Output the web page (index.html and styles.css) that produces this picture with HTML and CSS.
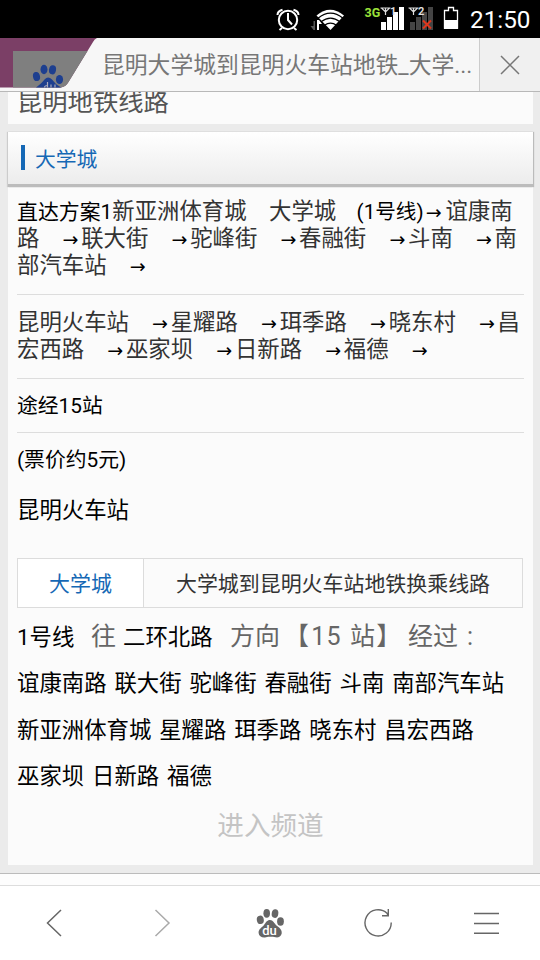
FILE: index.html
```
<!DOCTYPE html>
<html lang="zh-CN">
<head>
<meta charset="utf-8">
<title>昆明大学城到昆明火车站地铁</title>
<link rel="stylesheet" href="styles.css">
</head>
<body>
<div class="screen">
  <div class="status">
    <svg class="status-icons" width="200" height="38" viewBox="0 0 200 38">
      <g fill="none" stroke="#fff" stroke-width="2">
        <circle cx="18" cy="20" r="9.200"/>
        <path d="M18 13v7l4 4.500M12 28l-2.500 2M24 28l2.500 2M7.500 15q0-4 5-5.300M28.500 15q0-4-5-5.300"/>
      </g>
      <path d="M46.500 15.500Q60 4 74 15.500L60.500 30z" fill="#fff"/>
      <g fill="none" stroke="#000" stroke-width="1.300">
        <path d="M48 18.200q12.500-10 25 0M51 21.800q9.500-7.500 19 0M54.500 25.300q6-4.500 12 0"/>
      </g>
      <path d="M47 20h2v10h-2zM49 20l3 4h-3z" fill="#fff"/>
      <path d="M43.500 21H45v9h-1.500zM43.500 30l-3-4h3z" fill="#555"/>
      <g fill="#fff"><path d="M111 22h5v8h-5zM117 17h5v13h-5zM123 12h5v18h-5zM129 7h5v23h-5z"/></g>
      <g fill="#444"><path d="M140 22h5v8h-5zM146 17h5v13h-5zM152 12h5v18h-5zM158 7h5v23h-5z"/></g>
      <g fill="none" stroke="#ddd" stroke-width="1.200"><path d="M115.500 15V8M110.500 8h10M111.500 8l4 4 4-4M143.500 15V8M138.500 8h10M139.500 8l4 4 4-4"/></g>
      <path d="M153 20.500l8 8M161 20.500l-8 8" stroke="#e0361c" stroke-width="2"/>
      <path d="M174.500 10.500h4v-3h5v3h4v17.500h-13z" fill="none" stroke="#fff" stroke-width="1.300"/>
      <path d="M174 20h14v9h-14z" fill="#fff"/>
      <text class="net" x="94.500" y="17">3G</text>
      <text class="sim" x="120" y="15">1</text>
      <text class="sim" x="148" y="15">2</text>
    </svg>
    <span class="clock">21:50</span>
  </div>

  <header class="tabbar">
    <svg class="tab-thumb" width="100" height="53" viewBox="0 0 100 53">
      <path d="M0 0H97Q94.500 1 93 4L68.500 44Q66 48.500 61 49.500H0z" fill="#7b3f66"/>
      <path d="M13 13H87.500L68.500 44Q66 48.500 61 49.500H13z" fill="#7f7f7f"/>
      <g fill="#1e3f8f">
        <ellipse cx="36.500" cy="38.500" rx="3.500" ry="4.600" transform="rotate(-12 36.500 38.500)"/>
        <ellipse cx="44" cy="31.500" rx="3.500" ry="4.700"/>
        <ellipse cx="52.500" cy="31.800" rx="3.500" ry="4.600" transform="rotate(10 52.500 31.800)"/>
        <ellipse cx="59.500" cy="41.500" rx="3.600" ry="4.600"/>
        <path d="M36 49.500Q42 45 44.500 41.500Q48 37.500 52 41.500Q55 46 61 49.500z"/>
      </g>
      <path d="M47.500 44v5.500M44.500 49.500q0-2 3-2M51 46.500v3M55 46.500v3" fill="none" stroke="#aab" stroke-width="1.200"/>
    </svg>
    <div class="tab-title">昆明大学城到昆明火车站地铁_大学...</div>
    <div class="tab-close">
      <svg width="20" height="20" viewBox="0 0 20 20"><path d="M1 1L19 19M19 1L1 19" stroke="#777" stroke-width="1.500"/></svg>
    </div>
  </header>

  <main class="page">
    <div class="card page-title"><span>昆明地铁线路</span></div>
    <section class="card route">
      <h2 class="section-head"><i></i>大学城</h2>
      <div class="body">
        <div class="row stops">
          <div><b class="lead">直达方案1</b>新亚洲体育城　大学城　<b class="line-no">(1号线)</b><b class="arrow first">→</b>谊康南</div>
          <div>路　<b class="arrow">→</b>联大街　<b class="arrow">→</b>驼峰街　<b class="arrow">→</b>春融街　<b class="arrow">→</b>斗南　<b class="arrow">→</b>南</div>
          <div>部汽车站　<b class="arrow">→</b></div>
        </div>
        <div class="row stops">
          <div>昆明火车站　<b class="arrow">→</b>星耀路　<b class="arrow">→</b>珥季路　<b class="arrow">→</b>晓东村　<b class="arrow">→</b>昌</div>
          <div>宏西路　<b class="arrow">→</b>巫家坝　<b class="arrow">→</b>日新路　<b class="arrow">→</b>福德　<b class="arrow">→</b></div>
        </div>
        <div class="row small">途经15站</div>
        <div class="row small last">(票价约5元)</div>
        <div class="terminus">昆明火车站</div>
        <div class="tabs">
          <div class="tab active">大学城</div>
          <div class="tab">大学城到昆明火车站地铁换乘线路</div>
        </div>
        <div class="direction"><b class="no">1号线</b><span class="to">往</span><b class="dest">二环北路</b><span class="dir">方向</span><span class="count">【<span class="num">15 </span>站】</span><span class="via">经过</span><span class="colon">:</span></div>
        <div class="stations">
          <div>谊康南路 联大街 驼峰街 春融街 斗南 南部汽车站</div>
          <div>新亚洲体育城 星耀路 珥季路 晓东村 昌宏西路</div>
          <div>巫家坝 日新路 福德</div>
        </div>
        <div class="enter">进入频道</div>
      </div>
    </section>
  </main>

  <div class="strip"></div>
  <nav class="toolbar">
    <div><svg width="30" height="30" viewBox="0 0 30 30"><path d="M22 2L8.500 15L22 28" fill="none" stroke="#666" stroke-width="1.500"/></svg></div>
    <div><svg width="30" height="30" viewBox="0 0 30 30"><path d="M8.500 2L22 15L8.500 28" fill="none" stroke="#aaa" stroke-width="1.500"/></svg></div>
    <div><svg width="30" height="30" viewBox="0 0 30 30">
      <g fill="#666">
        <ellipse cx="5.300" cy="11.800" rx="3.500" ry="4.200" transform="rotate(-10 5.300 11.800)"/>
        <ellipse cx="11.700" cy="5.300" rx="3.300" ry="4.400"/>
        <ellipse cx="20" cy="5.600" rx="3.300" ry="4.300" transform="rotate(10 20 5.600)"/>
        <ellipse cx="25.500" cy="13.500" rx="3.400" ry="4.200"/>
        <path d="M15 12C18 12 19.500 15.500 21.500 17.500C24 19.500 27.200 21.500 26.700 25.500C26 29 23 29.700 20.500 29.300C17 28.700 14 28.700 11 29.300C7 30 4 28.500 3.600 25C3.400 21 7 19.500 9 17C10.800 14.500 12 12 15 12z"/>
      </g>
      <text class="paw-text" x="14.500" y="27">du</text>
    </svg></div>
    <div><svg width="30" height="30" viewBox="0 0 30 30"><path d="M28.200 14.500A13.100 13.100 0 1 1 24 5.200L25 7.500M25.300 1V7.800H19" fill="none" stroke="#666" stroke-width="1.400"/></svg></div>
    <div><svg width="30" height="30" viewBox="0 0 30 30"><path d="M3 5.500H28M3 15.500H28M3 25.200H28" stroke="#666" stroke-width="1.500"/></svg></div>
  </nav>
</div>
</body>
</html>
```
FILE: styles.css
```
* { box-sizing: border-box; }
body { margin: 0; }
b, i { font-weight: 400; font-style: normal; }

.screen {
  width: 540px;
  height: 960px;
  display: flex;
  flex-direction: column;
  overflow: hidden;
  background: #ebebeb;
  font-family: Roboto, "Noto Sans CJK SC", sans-serif;
  white-space: nowrap;
}

.status {
  flex: none;
  height: 38px;
  background: #000;
  display: flex;
  justify-content: flex-end;
  padding-right: 10px;
}
.status-icons { flex: none; }
.clock { width: 60px; color: #fff; font-size: 24.3px; line-height: 40px; text-align: center; }
.net { fill: #9be23a; font: 700 12.5px Roboto, sans-serif; }
.sim { fill: #ddd; font: 700 11px Roboto, sans-serif; }

.tabbar {
  flex: none;
  height: 54px;
  display: flex;
  background: #f7f7f7;
  border-bottom: 1px solid #b8b8b8;
}
.tab-thumb { flex: none; }
.tab-title { width: 379px; padding-left: 2px; font-size: 22.8px; line-height: 56px; color: #777; }
.tab-close {
  flex: 1;
  display: flex;
  align-items: center;
  justify-content: center;
  border-left: 1px solid #ccc;
  background: #f0f0f0;
}

.page { flex: none; height: 781px; padding: 0 7px 0 8px; }
.card { background: #fbfbfb; }
.page-title {
  height: 32px;
  margin-bottom: 8px;
  overflow: hidden;
  display: flex;
  align-items: flex-end;
  padding: 0 0 3px 9px;
  font-size: 25.3px;
  line-height: 36px;
  color: #555;
}
.route { height: 733px; }
.section-head {
  margin: 0;
  height: 55px;
  padding: 0 0 1px 13px;
  display: flex;
  align-items: center;
  gap: 10px;
  font-size: 20.8px;
  font-weight: 400;
  color: #1568b5;
  background: linear-gradient(#fff, #ececec);
  border-bottom: 3px solid #bcbcbc;
  box-shadow: 1px 0 1px #bbb, -1px 0 1px #ccc;
}
.section-head i { width: 4px; height: 25px; background: #1568b5; }

.body { padding: 0 9px; }
.row { border-bottom: 1px solid #ddd; }
.row.last { border-bottom: 0; }
.stops { padding: 14px 0 15px; font-size: 22.4px; line-height: 27px; color: #333; }
.stops:first-child { padding-top: 11px; }
.stops > div { height: 27px; }
.lead { font-size: 20.9px; color: #000; }
.line-no { font-size: 20.6px; margin-left: -2px; color: #000; }
.arrow {
  display: inline-block;
  width: 19.4px;
  padding-right: 2px;
  text-align: center;
  font-family: "DejaVu Sans", sans-serif;
  font-size: 19px;
  line-height: 20px;
  color: #000;
}
.arrow.first { margin: 0 1px 0 1.5px; }
.small { height: 54px; font-size: 20.8px; line-height: 54px; color: #000; }
.terminus { height: 71px; font-size: 22.4px; line-height: 46px; color: #000; }

.tabs {
  height: 50px;
  margin-right: 1px;
  display: flex;
  border: 1px solid #dcdcdc;
  font-size: 20.95px;
  line-height: 50px;
  color: #333;
}
.tab { flex: 1; text-align: center; }
.tab.active { flex: none; width: 126px; background: #fff; color: #1568b5; border-right: 1px solid #dcdcdc; }

.direction { height: 52px; display: flex; align-items: baseline; line-height: 57px; font-size: 25px; color: #666; }
.direction b { color: #000; font-size: 22.4px; }
.no { width: 74px; }
.to { width: 32px; }
.dest { width: 107px; }
.dir { width: 54px; }
.count { width: 124px; letter-spacing: 1.2px; }
.num { margin-left: 1px; margin-right: 1px; letter-spacing: 1.2px; }
.via { width: 59px; }

.stations { font-size: 22.4px; line-height: 46.5px; word-spacing: 2.3px; color: #000; }
.stations > div { height: 46.5px; }
.stations > div:first-child { line-height: 47.5px; }
.enter { text-align: center; font-size: 26.6px; line-height: 52px; color: #c4c4c4; }

.strip {
  flex: none;
  height: 13px;
  background: #fdfdfd;
  border-top: 1px solid #bbb;
  border-bottom: 1px solid #ddd;
}
.toolbar { flex: 1; display: flex; background: #fff; }
.toolbar > div { flex: 1; display: flex; align-items: center; justify-content: center; }
.paw-text { fill: #fff; font: 500 13px Roboto, sans-serif; text-anchor: middle; }
```
